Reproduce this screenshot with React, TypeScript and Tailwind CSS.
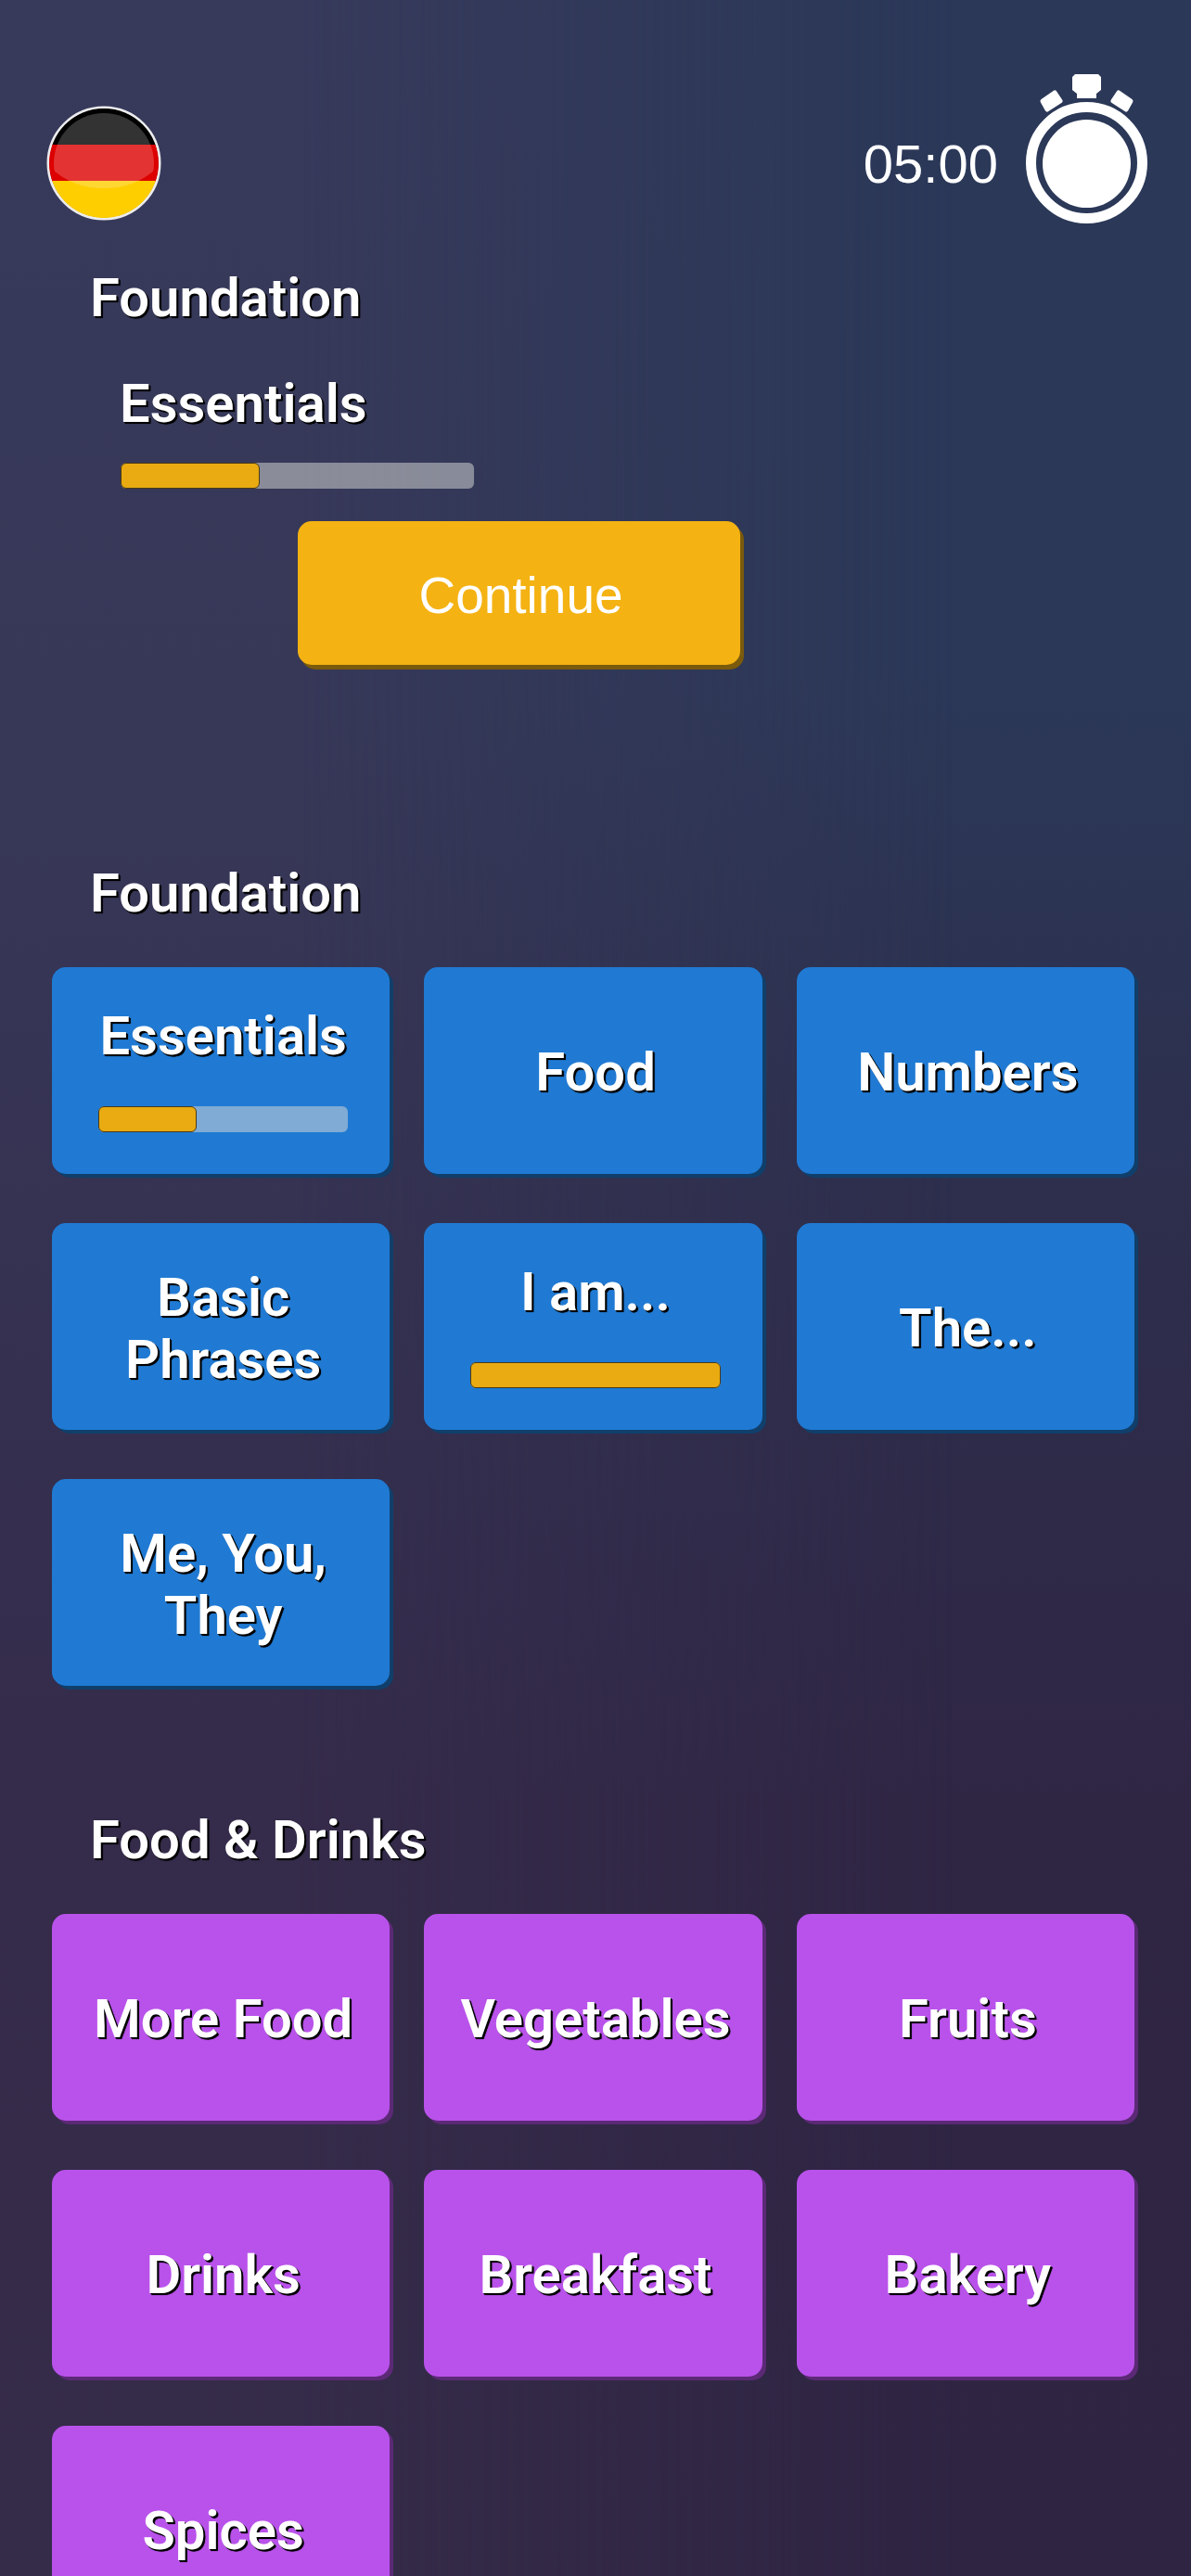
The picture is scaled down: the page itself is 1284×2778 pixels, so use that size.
type Lesson = { title: string; progress?: number };

const foundation: Lesson[] = [
  { title: "Essentials", progress: 39.4 },
  { title: "Food" },
  { title: "Numbers" },
  { title: "Basic Phrases" },
  { title: "I am...", progress: 100 },
  { title: "The..." },
  { title: "Me, You, They" },
];

const foodAndDrinks: Lesson[] = [
  { title: "More Food" },
  { title: "Vegetables" },
  { title: "Fruits" },
  { title: "Drinks" },
  { title: "Breakfast" },
  { title: "Bakery" },
  { title: "Spices" },
];

const labelText =
  "font-[Roboto,sans-serif] text-[58px] leading-[67px] font-semibold text-white [text-shadow:2px_2px_0_#000,1px_1px_0_#000,2px_2px_1px_#000]";

function GermanFlag() {
  return (
    <svg viewBox="0 0 124 124" className="size-[124px]" aria-hidden="true">
      <defs>
        <clipPath id="flag-disc">
          <circle cx="62" cy="62" r="59" />
        </clipPath>
        <clipPath id="flag-shine">
          <circle cx="62" cy="62" r="54" />
        </clipPath>
      </defs>
      <circle cx="62" cy="62" r="60" fill="#000" stroke="#ececee" strokeWidth="3" />
      <g clipPath="url(#flag-disc)">
        <rect width="124" height="43" fill="#000" />
        <rect y="42" width="124" height="40" fill="#dd0000" />
        <rect y="81" width="124" height="43" fill="#ffce00" />
      </g>
      <path
        d="M0 0H124V62Q100 89 62 89T0 62Z"
        fill="#fff"
        fillOpacity="0.2"
        clipPath="url(#flag-shine)"
      />
    </svg>
  );
}

function Stopwatch() {
  return (
    <svg viewBox="0 0 131 161" className="h-[161px] w-[131px]" aria-hidden="true" fill="#fff">
      <path d="M53 0H78L81 3V17L76 21V26H55V21L50 17V3Z" />
      <g stroke="#fff" strokeWidth="5" strokeLinejoin="round">
        <path d="M18 29L31 20L37 29L23 38Z" />
        <path d="M113 29L100 20L94 29L108 38Z" />
      </g>
      <circle cx="65.5" cy="95.5" r="60" fill="none" stroke="#fff" strokeWidth="11" />
      <circle cx="65.5" cy="96.5" r="47.5" />
    </svg>
  );
}

function ProgressBar({ value, label }: { value: number; label: string }) {
  return (
    <span
      role="progressbar"
      aria-label={label}
      aria-valuenow={value}
      aria-valuemin={0}
      aria-valuemax={100}
      className="block h-7 w-full rounded-md bg-[#d6d9d5]/52"
    >
      <span
        className="block h-full rounded-md border border-[#4a3a16] bg-[#e9ab11]"
        style={{ width: `${value}%` }}
      />
    </span>
  );
}

function LessonTile({ lesson, tone }: { lesson: Lesson; tone: string }) {
  const hasProgress = lesson.progress !== undefined;
  return (
    <button
      type="button"
      className={`flex h-[223px] flex-col items-center justify-center gap-[42px] rounded-[15px] pr-[22px] pl-[27px] text-center ${labelText} ${tone} ${
        hasProgress ? "pb-1" : "pt-1"
      }`}
    >
      <span>{lesson.title}</span>
      {hasProgress && (
        <span className="block w-full px-[23px]">
          <ProgressBar value={lesson.progress!} label={`${lesson.title} progress`} />
        </span>
      )}
    </button>
  );
}

function LessonSection({ title, lessons, tone }: { title: string; lessons: Lesson[]; tone: string }) {
  return (
    <section className="flex flex-col gap-[46px]">
      <h2 className={`pl-[97px] ${labelText}`}>{title}</h2>
      <div className="grid grid-cols-3 gap-x-[37px] gap-y-[53px] pr-[61px] pl-14">
        {lessons.map((lesson) => (
          <LessonTile key={lesson.title} lesson={lesson} tone={tone} />
        ))}
      </div>
    </section>
  );
}

export default function App() {
  return (
    <div className="relative isolate h-screen overflow-hidden bg-[linear-gradient(to_bottom,#2b3858_0%,#2b3858_26%,#2d2f4d_46%,#2f2644_70%,#2f2543_100%)]">
      <div
        aria-hidden="true"
        className="absolute inset-0 -z-10 bg-[linear-gradient(to_bottom,#373a5b_0%,#373858_28%,#353151_50%,#352b4a_70%,#352c49_100%)] [mask-image:linear-gradient(to_right,#000_25%,transparent_80%)]"
      />
      <div className="h-full overflow-y-auto [scrollbar-width:none]">
        <header className="flex items-center justify-between pt-20 pr-[47px] pl-[50px]">
          <button type="button" aria-label="Language: German" className="mt-[30px]">
            <GermanFlag />
          </button>
          <div className="flex items-center gap-[30px]">
            <span className="pt-8 font-[Liberation_Sans,sans-serif] text-[58px] leading-[66px] text-white">
              05:00
            </span>
            <Stopwatch />
          </div>
        </header>

        <main className="flex flex-col pt-[47px] pb-[132px]">
          <section className="mb-[213px] flex flex-col">
            <h2 className={`pl-[97px] ${labelText}`}>Foundation</h2>
            <h3 className={`mt-[47px] pl-[129px] ${labelText}`}>Essentials</h3>
            <div className="mt-[30px] ml-[130px] w-[381px]">
              <ProgressBar value={39.4} label="Essentials progress" />
            </div>
            <button
              type="button"
              className="mt-[35px] ml-[321px] h-[155px] w-[477px] rounded-[15px] bg-[#f4b213] pt-1 pl-1 font-[Liberation_Sans,sans-serif] text-[55px] leading-[62px] text-white shadow-[4px_5px_0_#7a5a0c]"
            >
              Continue
            </button>
          </section>

          <div className="flex flex-col gap-[133px]">
            <LessonSection
              title="Foundation"
              lessons={foundation}
              tone="bg-[#207ad3] shadow-[4px_4px_0_#103f6b]"
            />
            <LessonSection
              title="Food & Drinks"
              lessons={foodAndDrinks}
              tone="bg-[#b952eb] shadow-[4px_4px_0_#5c2976]"
            />
          </div>
        </main>
      </div>
    </div>
  );
}
